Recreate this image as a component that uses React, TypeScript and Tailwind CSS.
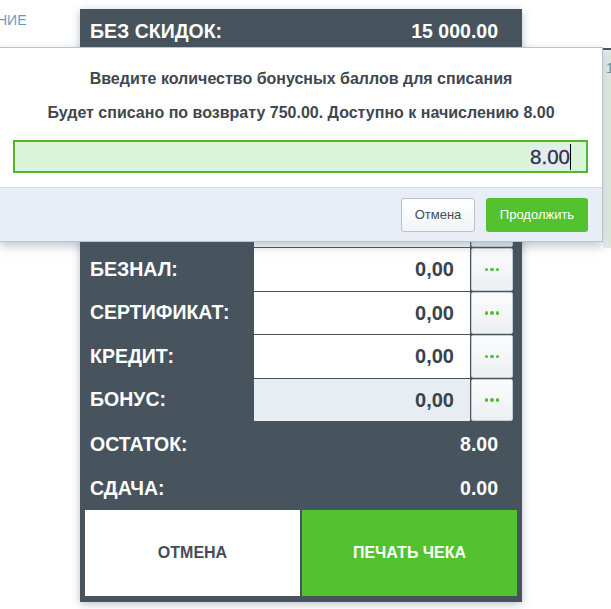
import React from 'react';

const FONT = { fontFamily: '"Liberation Sans", Arial, sans-serif' };

const inputRows = [
  { label: 'НАЛИЧНЫЕ:', value: '15 000,00', disabled: false },
  { label: 'БЕЗНАЛ:', value: '0,00', disabled: false },
  { label: 'СЕРТИФИКАТ:', value: '0,00', disabled: false },
  { label: 'КРЕДИТ:', value: '0,00', disabled: false },
  { label: 'БОНУС:', value: '0,00', disabled: true },
];

function Dots() {
  return (
    <button className="w-[42px] h-full rounded-[2px] border border-[#c3ccd5] bg-gradient-to-b from-[#fbfcfd] to-[#eceff3] flex items-center justify-center gap-[2px]">
      <span className="w-[3.5px] h-[3.5px] rounded-full bg-[#55bd33]" />
      <span className="w-[3.5px] h-[3.5px] rounded-full bg-[#55bd33]" />
      <span className="w-[3.5px] h-[3.5px] rounded-full bg-[#55bd33]" />
    </button>
  );
}

function TotalRow({ label, value, h }: { label: string; value: string; h: string }) {
  return (
    <div className={`flex items-center justify-between pl-[10px] pr-[24px] ${h}`}>
      <span className="text-[19.5px] font-bold text-white">{label}</span>
      <span className="text-[19.5px] font-bold text-white">{value}</span>
    </div>
  );
}

export default function App() {
  return (
    <div className="relative w-[611px] h-[609px] bg-white overflow-hidden" style={FONT}>
      {/* фон: касса */}
      <div className="flex">
        <div className="w-[80px] shrink-0 pt-[10px] overflow-hidden">
          <span className="block -ml-[3px] text-[14px] text-[#6d9cc2]">НИЕ</span>
        </div>

        <div className="w-[442px] shrink-0 mt-[9px] bg-[#47535d] shadow-[0_2px_8px_rgba(60,80,100,0.35)] pb-[6px]">
          <div className="h-[195.5px] flex flex-col">
            <TotalRow label="БЕЗ СКИДОК:" value="15 000.00" h="h-[46px]" />
            <TotalRow label="СКИДКА:" value="0.00" h="flex-1" />
            <TotalRow label="К ОПЛАТЕ:" value="15 000.00" h="flex-1" />
          </div>

          <div className="flex flex-col gap-px">
            {inputRows.map((r) => (
              <div key={r.label} className="flex h-[42.5px]">
                <div className="w-[174px] pl-[10px] flex items-center">
                  <span className="text-[19.5px] font-bold text-white">{r.label}</span>
                </div>
                <div
                  className={`w-[216px] flex items-center justify-end pr-[16px] ${
                    r.disabled ? 'bg-[#e8edf3]' : 'bg-white'
                  }`}
                >
                  <span className="text-[20px] font-bold text-[#38434d]">{r.value}</span>
                </div>
                <div className="ml-px">
                  <Dots />
                </div>
              </div>
            ))}
          </div>

          <TotalRow label="ОСТАТОК:" value="8.00" h="h-[47px]" />
          <TotalRow label="СДАЧА:" value="0.00" h="h-[42px]" />

          <div className="flex gap-[2px] px-[5px] h-[86px]">
            <button className="flex-1 bg-white text-[16px] font-bold text-[#444d57]">ОТМЕНА</button>
            <button className="flex-1 bg-[#52c22e] text-[16px] font-bold text-white">ПЕЧАТЬ ЧЕКА</button>
          </div>
        </div>

        <div className="ml-[81px] mt-[48px] w-[8px] h-[200px] border-t-2 border-[#4a5561] bg-gradient-to-r from-[#f1f4f6] to-[#dce9dc] pl-[3px] pt-[6px]">
          <span className="text-[14px] text-[#7c8b96]">1</span>
        </div>
      </div>

      {/* диалог списания бонусов */}
      <div className="absolute left-0 top-[47px] w-[603px] bg-white border-t border-r border-b border-[#b6c5d3] shadow-[0_4px_10px_rgba(70,90,110,0.35)]">
        <div className="h-[139px] flex flex-col items-center">
          <div className="mt-[19px] text-[16px] font-bold text-[#40474f]">
            Введите количество бонусных баллов для списания
          </div>
          <div className="mt-[10px] text-[16px] font-bold text-[#40474f]">
            Будет списано по возврату 750.00. Доступно к начислению 8.00
          </div>
          <div className="self-start ml-[13px] mt-[15px] w-[575px] h-[33px] border-2 border-[#52b62c] bg-[#d8f5d8] flex items-center justify-end pr-[15px]">
            <span className="text-[20.5px] text-[#2c3843] bg-[#e4ebf3] leading-[22px] [-webkit-text-stroke:0.3px_#2c3843]">8.00</span>
            <span className="w-px h-[26px] bg-black" />
          </div>
        </div>
        <div className="h-[54px] bg-[#e9eef6] border-t border-[#cfd9e4] flex items-center justify-end gap-[11px] pr-[14px]">
          <button className="w-[74px] h-[34px] rounded-[3px] border border-[#b5c3d1] bg-gradient-to-b from-white to-[#f1f4f8] text-[13px] text-[#454d56]">
            Отмена
          </button>
          <button className="w-[102px] h-[34px] rounded-[3px] bg-[#52c22e] text-[13px] text-white">
            Продолжить
          </button>
        </div>
      </div>
    </div>
  );
}
